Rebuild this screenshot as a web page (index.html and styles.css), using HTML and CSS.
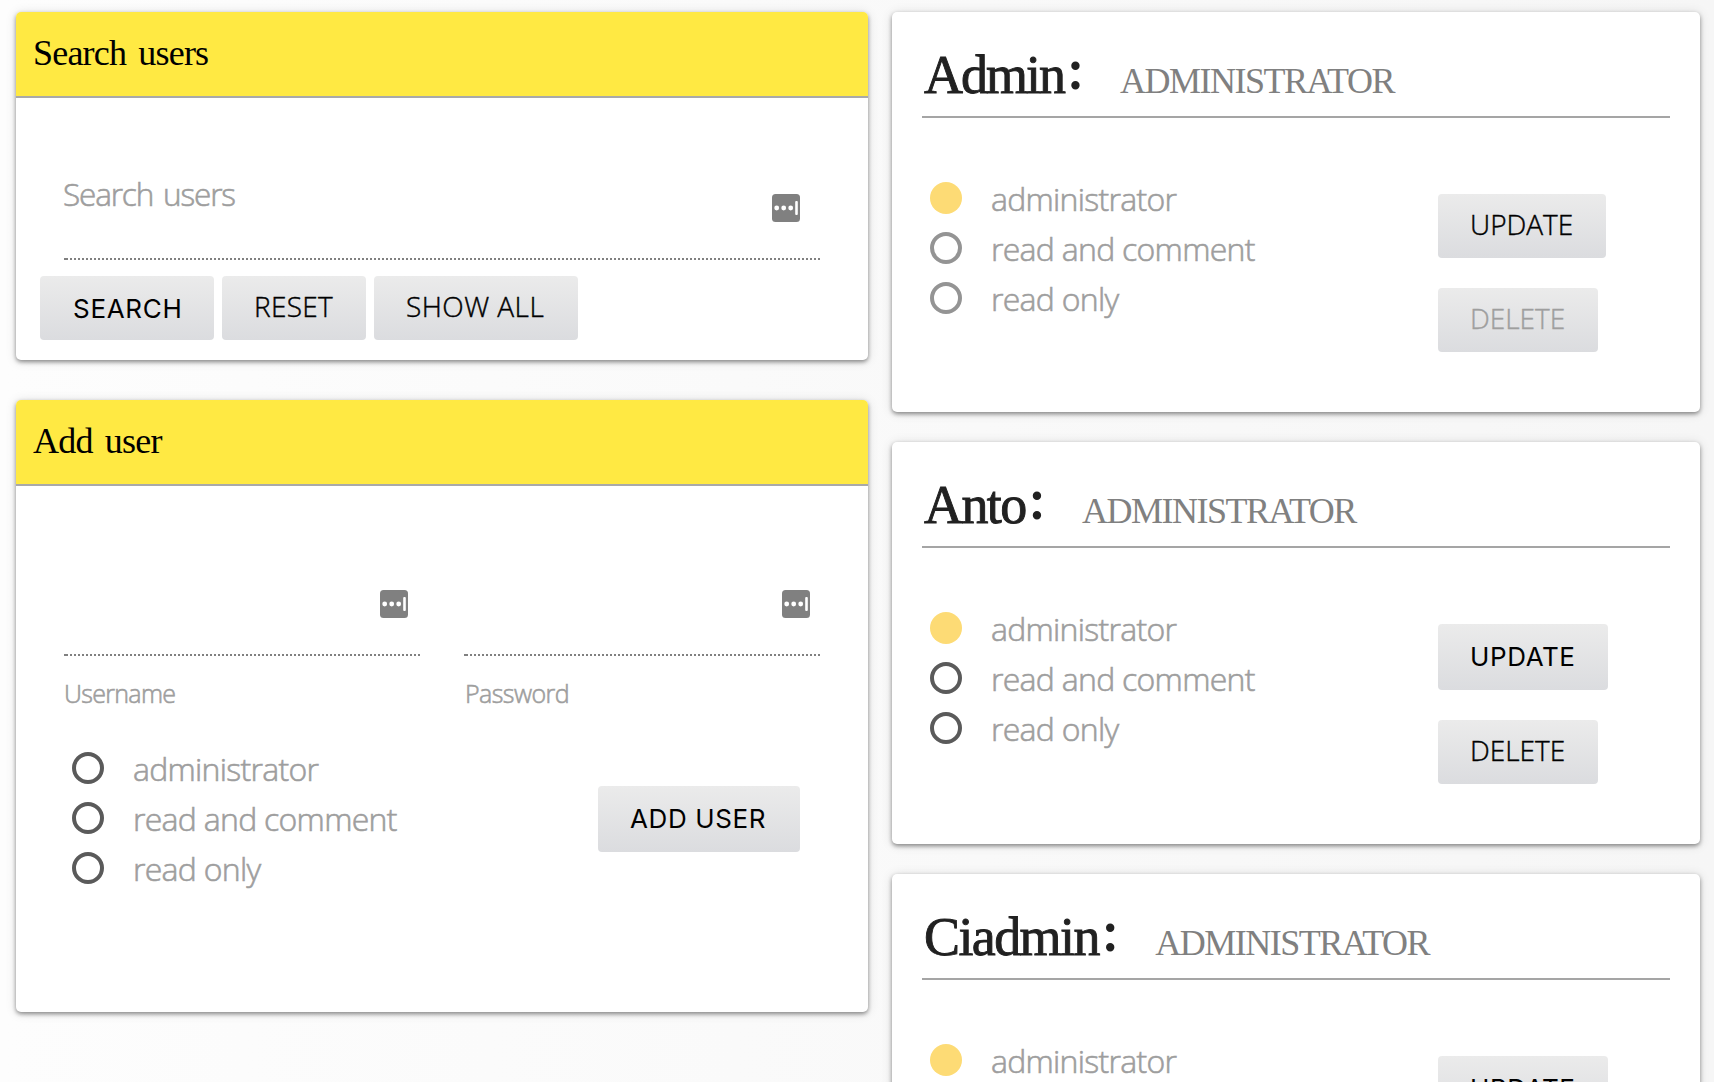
FILE: index.html
```html
<!DOCTYPE html>
<html lang="en">
<head>
<meta charset="utf-8">
<title>Users</title>
<link rel="stylesheet" href="styles.css">
</head>
<body>
<svg class="sprite" aria-hidden="true">
  <symbol id="key" viewBox="0 0 28 28">
    <rect width="28" height="28" rx="3.5" fill="#808080"/>
    <circle cx="4.7" cy="14" r="2.4" fill="#fff"/><circle cx="11.7" cy="14" r="2.4" fill="#fff"/><circle cx="18.7" cy="14" r="2.4" fill="#fff"/>
    <rect x="23.2" y="7" width="2.6" height="14" rx="1" fill="#fff"/>
  </symbol>
</svg>
<main class="page">
  <div class="side">
    <section class="card search">
      <h2 class="card-head">Search users</h2>
      <div class="field search-field"><span class="placeholder">Search users</span><svg class="key"><use href="#key"/></svg></div>
      <div class="actions">
        <button class="btn strong b-search">SEARCH</button>
        <button class="btn b-reset">RESET</button>
        <button class="btn b-show">SHOW ALL</button>
      </div>
    </section>
    <section class="card add">
      <h2 class="card-head">Add user</h2>
      <div class="fields">
        <div><div class="field"><svg class="key"><use href="#key"/></svg></div><label class="hint">Username</label></div>
        <div><div class="field"><svg class="key"><use href="#key"/></svg></div><label class="hint pass">Password</label></div>
      </div>
      <div class="add-row">
        <ul class="roles">
          <li><i class="dot"></i><span>administrator</span></li>
          <li><i class="dot"></i><span>read and comment</span></li>
          <li><i class="dot"></i><span>read only</span></li>
        </ul>
        <button class="btn strong b-add">ADD USER</button>
      </div>
    </section>
  </div>
  <div class="users">
    <section class="card user locked">
      <header class="user-head"><h3 class="long">Admin<span class="colon">:</span></h3><span class="role">ADMINISTRATOR</span></header>
      <div class="user-body">
        <ul class="roles">
          <li><i class="dot on"></i><span>administrator</span></li>
          <li><i class="dot"></i><span>read and comment</span></li>
          <li><i class="dot"></i><span>read only</span></li>
        </ul>
        <div class="stack"><button class="btn b-update">UPDATE</button><button class="btn b-delete" disabled>DELETE</button></div>
      </div>
    </section>
    <section class="card user">
      <header class="user-head"><h3>Anto<span class="colon">:</span></h3><span class="role">ADMINISTRATOR</span></header>
      <div class="user-body">
        <ul class="roles">
          <li><i class="dot on"></i><span>administrator</span></li>
          <li><i class="dot"></i><span>read and comment</span></li>
          <li><i class="dot"></i><span>read only</span></li>
        </ul>
        <div class="stack"><button class="btn strong b-update">UPDATE</button><button class="btn b-delete">DELETE</button></div>
      </div>
    </section>
    <section class="card user">
      <header class="user-head"><h3>Ciadmin<span class="colon">:</span></h3><span class="role">ADMINISTRATOR</span></header>
      <div class="user-body">
        <ul class="roles">
          <li><i class="dot on"></i><span>administrator</span></li>
          <li><i class="dot"></i><span>read and comment</span></li>
          <li><i class="dot"></i><span>read only</span></li>
        </ul>
        <div class="stack"><button class="btn strong b-update">UPDATE</button><button class="btn b-delete">DELETE</button></div>
      </div>
    </section>
  </div>
</main>
</body>
</html>
```
FILE: styles.css
```css
* { box-sizing: border-box; margin: 0; padding: 0; }
html, body { height: 100%; overflow: hidden; }
body {
  font-family: "Open Sans", "Noto Sans", sans-serif;
  font-weight: 300;
  background: linear-gradient(to right, #fdfdfd, #f6f6f6);
}
.sprite { position: absolute; width: 0; height: 0; }
.page { display: flex; gap: 24px; padding: 12px 14px 0 16px; }
.side { width: 852px; display: flex; flex-direction: column; gap: 40px; }
.users { width: 808px; display: flex; flex-direction: column; gap: 30px; }
.card {
  background: #fff;
  border-radius: 5px;
  box-shadow: 0 2px 4px rgba(0, 0, 0, .42), 0 1px 12px rgba(0, 0, 0, .12);
}
.card-head {
  height: 86px;
  padding-left: 17px;
  background: #ffe943;
  border-bottom: 2px solid #a9a9a9;
  border-radius: 5px 5px 0 0;
  font: 400 36px/82px "Liberation Serif", serif;
  letter-spacing: -.8px;
  word-spacing: 4px;
  color: #000;
}
.search { height: 348px; }
.add { height: 612px; }
.field {
  height: 162px;
  display: flex;
  align-items: center;
  justify-content: flex-end;
  background: linear-gradient(#808080, #808080) 0 100% / 2px 2px no-repeat,
    repeating-linear-gradient(to right, transparent 0 2px, #808080 2px 4px) 0 100% / 100% 2px no-repeat;
}
.key { width: 28px; height: 28px; }
.search-field { margin: 0 48px; padding: 58px 20px 0 0; justify-content: space-between; }
.placeholder { font-size: 31.5px; line-height: 40px; letter-spacing: -1.15px; word-spacing: 3px; color: #9e9e9e; margin: -28px 0 0 -1px; }
.placeholder, .hint, .roles span { -webkit-text-stroke: .6px #9e9e9e; }
.actions { display: flex; gap: 8px; padding: 16px 24px 0; }
.btn {
  height: 64px;
  border: 0;
  border-radius: 4px;
  background: linear-gradient(#ebebeb, #dbdcdf);
  font: 300 28px/60px "Open Sans", "Noto Sans", sans-serif;
  -webkit-text-stroke: .4px currentColor;
  color: #000;
  text-align: left;
  padding: 0 0 4px 32px;
  white-space: nowrap;
}
.strong { font: 400 26px/60px Inter, sans-serif; letter-spacing: .6px; padding-bottom: 0; -webkit-text-stroke: 0; }
.btn:disabled { color: #9e9e9e; }
.b-search { width: 174px; padding: 2px 0 0 33px; letter-spacing: .7px; }
.b-reset { width: 144px; letter-spacing: .3px; }
.b-show { width: 204px; padding-left: 32px; letter-spacing: .45px; }
.b-add { width: 202px; height: 66px; margin-top: 34px; letter-spacing: .6px; }
.b-update { width: 168px; }
.b-update.strong { width: 170px; height: 66px; }
.b-delete { width: 160px; }
.fields { display: flex; gap: 44px; padding: 0 48px; }
.fields > div { width: 356px; }
.fields .field { height: 170px; padding: 66px 12px 0 0; }
.fields > div + div .field { padding-right: 10px; }
.hint { display: block; font-size: 25px; line-height: 34px; margin-top: 20px; height: 36px; letter-spacing: -.7px; color: #9e9e9e; }
.pass { padding-left: 1px; letter-spacing: -.55px; }
.add-row { display: flex; justify-content: space-between; padding: 40px 68px 0 56px; }
.roles { list-style: none; }
.roles li { height: 50px; display: flex; gap: 29px; align-items: flex-start; font-size: 32px; line-height: 34px; letter-spacing: -.72px; color: #9e9e9e; }
.dot { width: 32px; height: 32px; border: 4px solid #5a5a5a; border-radius: 50%; }
.locked .dot { border-color: #949494; }
.dot.on, .locked .dot.on { border: 0; background: #fddb75; }
.user { height: 402px; padding: 0 30px; }
.user.locked { height: 400px; }
.user-head { height: 106px; border-bottom: 2px solid #a5a5a5; display: flex; align-items: baseline; padding: 36px 0 0 2px; }
.user-head h3 { font: 400 54px/54px "Liberation Serif", serif; letter-spacing: -1.6px; color: #212121; -webkit-text-stroke: .9px #212121; }
.user-head h3.long { letter-spacing: -2px; }
.colon { position: relative; top: -5px; margin-left: 4px; -webkit-text-stroke-width: 2px; }
.role { font: 400 36px/54px "Liberation Serif", serif; letter-spacing: -1.5px; color: #808080; margin-left: 39px; }
.user-body { display: flex; justify-content: space-between; padding: 64px 62px 0 8px; }
.stack { width: 170px; flex: none; margin-top: 12px; display: flex; flex-direction: column; gap: 30px; }
```
